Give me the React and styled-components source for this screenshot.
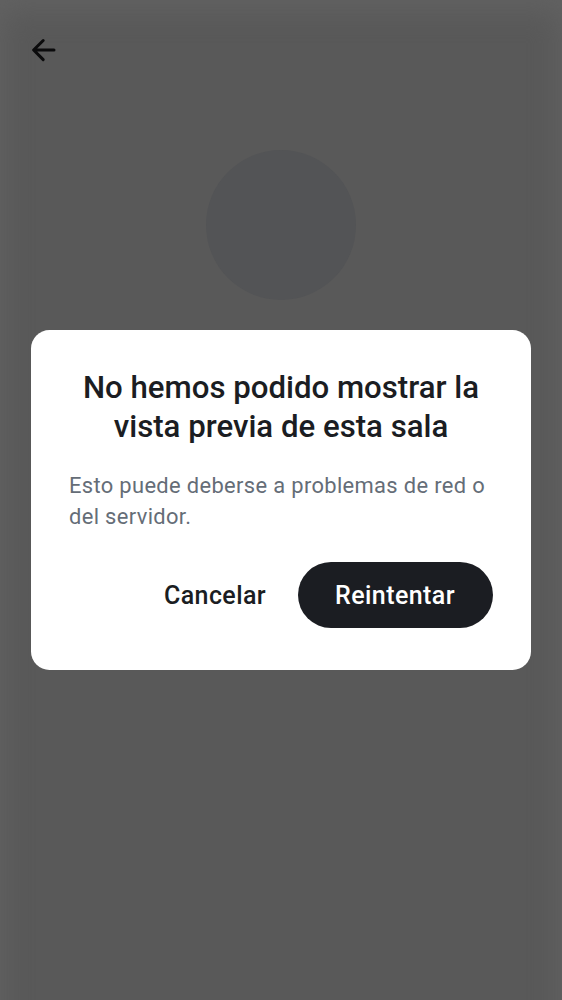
import React from "react";
import styled, { createGlobalStyle } from "styled-components";

const GlobalStyle = createGlobalStyle`
  * { box-sizing: border-box; }
  body { margin: 0; font-family: Roboto, "Liberation Sans", sans-serif; }
`;

const Screen = styled.main`
  position: relative;
  width: 562px;
  height: 1000px;
  overflow: hidden;
  background: #595959;

  &::before {
    content: "";
    position: absolute;
    inset: 0 0 -60px;
    box-shadow: inset 0 7px 28px 3px #626262;
    pointer-events: none;
  }
`;

const TopBar = styled.header`
  position: relative;
  height: 100px;
  padding: 36px 30px;
`;

const BackButton = styled.button`
  display: block;
  width: 28px;
  height: 28px;
  padding: 0;
  border: 0;
  background: none;
  color: #0b0b0c;
`;

const Avatar = styled.div`
  width: 150px;
  height: 150px;
  margin: 50px auto 0;
  border-radius: 50%;
  background: #535456;
`;

const Overlay = styled.div`
  position: absolute;
  inset: 0;
  display: flex;
  align-items: center;
  justify-content: center;
`;

const Dialog = styled.section`
  width: 500px;
  height: 340px;
  padding: 37.5px 38px 42px;
  border-radius: 18.5px;
  background: #fff;
`;

const Title = styled.h1`
  margin: 0;
  color: #1b1d22;
  font-size: 31.2px;
  font-weight: 500;
  line-height: 39px;
  text-align: center;
`;

const Message = styled.p`
  margin: 24.5px 0 0;
  color: #656d77;
  font-size: 21.9px;
  line-height: 31px;
  letter-spacing: 0.35px;
`;

const Actions = styled.footer`
  display: flex;
  justify-content: flex-end;
  margin-top: 30px;
`;

const Button = styled.button`
  height: 66px;
  padding: 0 ${(p) => (p.$primary ? "38px 0 37.5px" : "31.5px")};
  border: 0;
  border-radius: 33px;
  background: ${(p) => (p.$primary ? "#1b1d22" : "transparent")};
  color: ${(p) => (p.$primary ? "#fff" : "#1b1d22")};
  font: 500 25px/31px Roboto, "Liberation Sans", sans-serif;
  letter-spacing: 0.42px;
  white-space: nowrap;
`;

export default function App() {
  return (
    <>
      <GlobalStyle />
      <Screen>
        <TopBar>
          <BackButton aria-label="Atrás">
            <svg width="28" height="28" viewBox="0 0 28 28" fill="none" stroke="currentColor" strokeWidth="3" strokeLinecap="round" strokeLinejoin="round">
              <path d="M13.2 4.5 L3.6 14 L13.2 23.6 M4 14 H24" />
            </svg>
          </BackButton>
        </TopBar>
        <Avatar />
        <Overlay>
          <Dialog role="alertdialog">
            <Title>No hemos podido mostrar la<br />vista previa de esta sala</Title>
            <Message>Esto puede deberse a problemas de red o del servidor.</Message>
            <Actions>
              <Button>Cancelar</Button>
              <Button $primary>Reintentar</Button>
            </Actions>
          </Dialog>
        </Overlay>
      </Screen>
    </>
  );
}
